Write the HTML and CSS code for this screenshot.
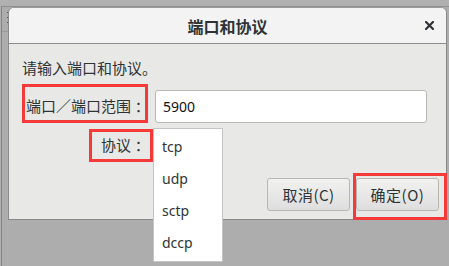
FILE: index.html
```html
<!DOCTYPE html>
<html lang="zh-CN">
<head>
<meta charset="utf-8">
<title>端口和协议</title>
<link rel="stylesheet" href="styles.css">
</head>
<body>
<div class="backdrop">
  <div class="bd-rule"></div>
  <div class="bd-marks"><i></i><i></i><i></i></div>
</div>

<div class="dialog">
  <div class="titlebar">
    <span class="title">端口和协议</span>
    <span class="close"><svg width="9" height="9" viewBox="0 0 9 9"><path d="M1 1 L8 8 M8 1 L1 8" stroke="#2e3436" stroke-width="2.2" stroke-linecap="square"/></svg></span>
  </div>
  <div class="content">
    <p class="prompt">请输入端口和协议。</p>
    <div class="form">
      <label class="lbl">端口／端口范围<span class="colon">：</span></label>
      <div class="entry">5900</div>
      <label class="lbl">协议<span class="colon">：</span></label>
      <div class="combo"></div>
    </div>
    <div class="buttons">
      <button class="btn">取消(C)</button>
      <button class="btn">确定(O)</button>
    </div>
  </div>
</div>

<ul class="menu">
  <li>tcp</li>
  <li>udp</li>
  <li>sctp</li>
  <li>dccp</li>
</ul>

<div class="mark mark-port"></div>
<div class="mark mark-proto"></div>
<div class="mark mark-ok"></div>
</body>
</html>
```
FILE: styles.css
```css
html, body {
  margin: 0;
  padding: 0;
}
body {
  width: 449px;
  height: 266px;
  background: #b0b0b0;
  overflow: hidden;
  position: relative;
  font-family: "Noto Sans CJK SC", "Noto Sans", sans-serif;
  font-size: 15px;
  color: #2e3436;
}

/* window behind the dialog */
.backdrop {
  position: absolute;
  left: 1px;
  top: 6px;
  right: 0;
  bottom: 0;
  border-left: 1px solid #858585;
  border-top: 1px solid #8e8e8e;
  background: #adadad;
}
.bd-rule {
  position: absolute;
  left: 0;
  top: 24px;
  width: 8px;
  height: 1px;
  background: #9a9a9a;
}
.bd-marks {
  position: absolute;
  left: 5px;
  top: 5px;
  display: flex;
  flex-direction: column;
  gap: 4px;
}
.bd-marks i {
  display: block;
  width: 2px;
  height: 1px;
  background: #555;
}

/* dialog window */
.dialog {
  position: absolute;
  left: 8px;
  top: 7px;
  width: 439px;
  height: 213px;
  box-sizing: border-box;
  border: 1px solid #8a8a8a;
  border-top-color: #9a9a9a;
  border-radius: 6px 6px 0 0;
  background: #e8e8e7;
  display: flex;
  flex-direction: column;
  overflow: hidden;
}
.titlebar {
  height: 35px;
  flex: none;
  background: #f3f3f3;
  border-bottom: 1px solid #8c8c8c;
  display: grid;
  grid-template-columns: 1fr auto 1fr;
  align-items: center;
}
.title {
  grid-column: 2;
  font-size: 16px;
  font-weight: bold;
  color: #2e3436;
  line-height: 20px;
}
.close {
  grid-column: 3;
  justify-self: end;
  margin-right: 12px;
  display: flex;
  width: 9px;
  height: 9px;
}

.content {
  flex: 1;
  display: flex;
  flex-direction: column;
  padding: 14px 0 8px 13px;
}
.prompt {
  margin: 0;
  line-height: 20px;
}
.form {
  margin-top: 12px;
  margin-right: 19px;
  display: grid;
  grid-template-columns: 124px 1fr;
  grid-auto-rows: 33px;
  column-gap: 9px;
  row-gap: 6px;
  align-items: center;
}
.lbl {
  text-align: right;
  line-height: 20px;
  margin-top: -2px;
}
.colon {
  display: inline-block;
  width: 15px;
  text-align: center;
  font-feature-settings: "halt" 1;
}
.entry {
  height: 33px;
  box-sizing: border-box;
  background: #fff;
  border: 1px solid #b8b8b4;
  border-radius: 3px;
  padding-left: 7px;
  display: flex;
  align-items: center;
  color: #111;
  font-family: "Noto Sans", sans-serif;
  font-size: 14px;
}
.combo {
  height: 33px;
}

.buttons {
  margin-top: auto;
  margin-right: 7px;
  display: flex;
  justify-content: flex-end;
  gap: 6px;
}
.btn {
  width: 83px;
  height: 33px;
  box-sizing: border-box;
  border: 1px solid #b6b6b3;
  border-radius: 3px;
  background: linear-gradient(#f1f1f0, #dedede);
  font-family: "Noto Sans CJK SC", sans-serif;
  font-size: 15px;
  color: #2e3436;
  padding: 0;
  letter-spacing: 0.5px;
}

/* popup list of the protocol combo */
.menu {
  position: absolute;
  left: 153px;
  top: 128px;
  width: 70px;
  height: 134px;
  box-sizing: border-box;
  margin: 0;
  padding: 2px 0;
  list-style: none;
  background: #fff;
  border: 1px solid #c4c4c4;
  font-family: "Noto Sans", sans-serif;
  font-size: 14px;
  color: #2e3436;
}
.menu li {
  height: 32px;
  line-height: 32px;
  padding-left: 8px;
}

/* red annotation frames */
.mark {
  position: absolute;
  box-sizing: border-box;
  border: 3px solid #f63a3a;
}
.mark-port {
  left: 22px;
  top: 84px;
  width: 126px;
  height: 39px;
}
.mark-proto {
  left: 89px;
  top: 129px;
  width: 64px;
  height: 33px;
}
.mark-ok {
  left: 353px;
  top: 173px;
  width: 94px;
  height: 47px;
}
```
